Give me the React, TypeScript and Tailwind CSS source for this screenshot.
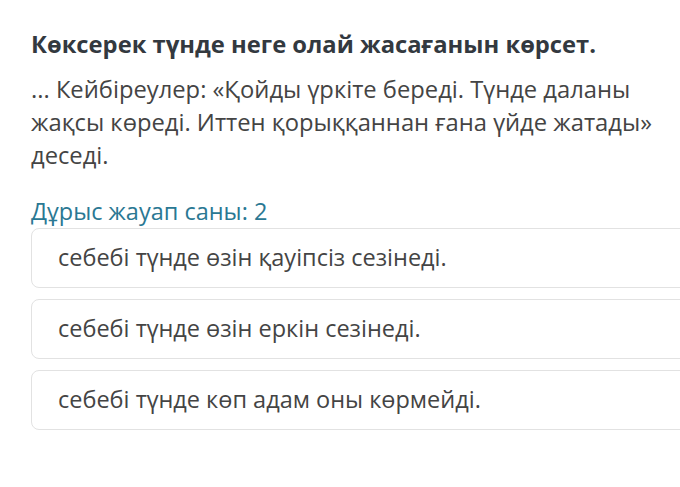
export default function App() {
  const options = [
    "себебі түнде өзін қауіпсіз сезінеді.",
    "себебі түнде өзін еркін сезінеді.",
    "себебі түнде көп адам оны көрмейді.",
  ]

  return (
    <div className="h-[487px] w-[680px] overflow-hidden bg-white font-['Open_Sans',sans-serif]">
      <div className="pl-[31px] pt-[29px]">
        <h1 className="text-[23.75px] leading-[30px] font-bold text-[#33393f]">
          Көксерек түнде неге олай жасағанын көрсет.
        </h1>
        <p className="mt-[14px] w-[640px] text-[23.75px] leading-[33px] text-[#444444]">
          ... Кейбіреулер: «Қойды үркіте береді. Түнде даланы жақсы көреді. Иттен қорыққаннан ғана үйде жатады» деседі.
        </p>
        <p className="mt-[24px] text-[23.5px] leading-[30px] text-[#2a7893]">Дұрыс жауап саны: 2</p>
        <div className="mt-[2px] flex w-[700px] flex-col gap-[11px]">
          {options.map((text) => (
            <div
              key={text}
              className="flex h-[60px] items-center rounded-[8px] border border-[#e2e2e2] pl-[26px] text-[23.5px] text-[#444444]"
            >
              {text}
            </div>
          ))}
        </div>
      </div>
    </div>
  )
}
